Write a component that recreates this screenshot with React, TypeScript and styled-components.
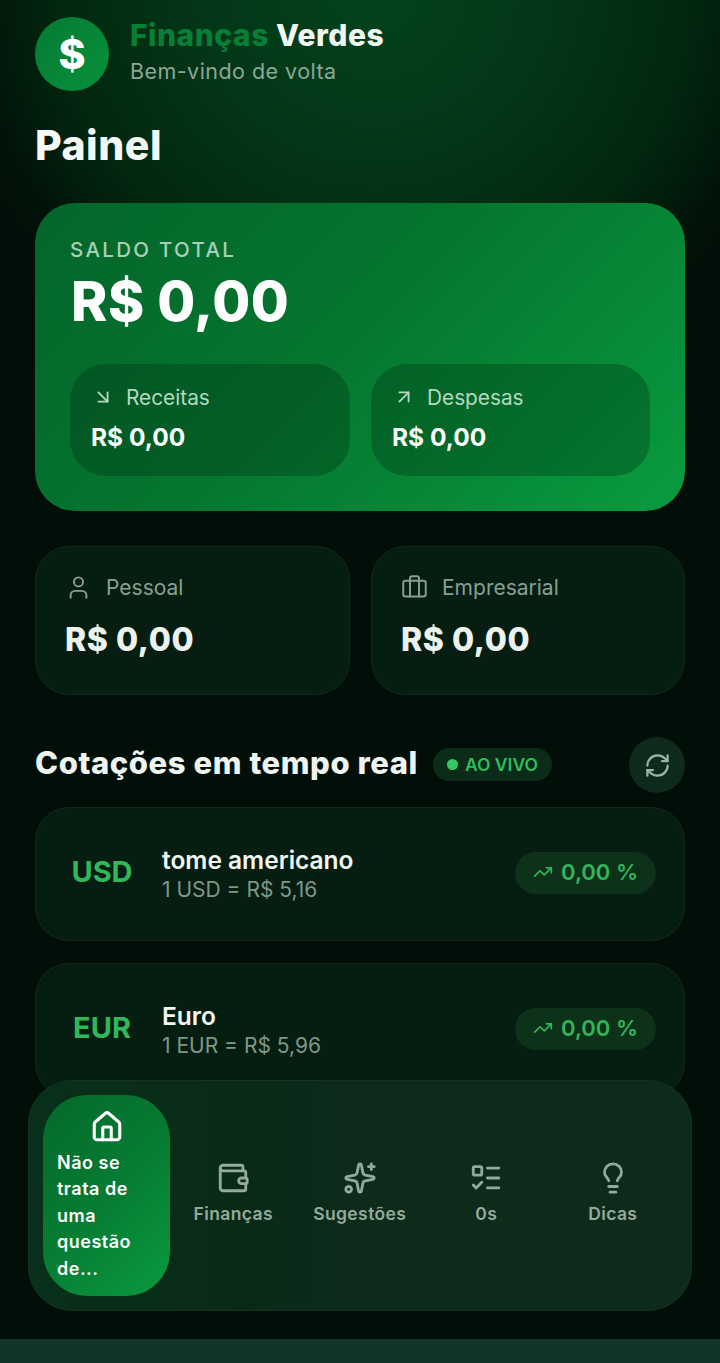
import React from "react";
import styled, { createGlobalStyle } from "styled-components";
import {
  ArrowDownRight,
  ArrowUpRight,
  Briefcase,
  House,
  Lightbulb,
  ListTodo,
  RefreshCw,
  Sparkles,
  TrendingUp,
  User,
  Wallet,
} from "lucide-react";

const Global = createGlobalStyle`
  * { box-sizing: border-box; }
  html, body { margin: 0; padding: 0; background: #010f08; }
  body { font-family: Inter, "Liberation Sans", sans-serif; }
`;

const Page = styled.div`
  position: relative;
  width: 720px;
  height: 1363px;
  overflow: hidden;
  background:
    radial-gradient(ellipse 450px 430px at 52% -10px, #04421d 0%, #033717 38%, #02270f 70%, rgba(1, 20, 10, 0.7) 90%, rgba(1, 15, 8, 0) 100%),
    #010f08;
  color: #f2f7f3;
`;

const Content = styled.main`
  padding: 17px 35px 0;
  display: flex;
  flex-direction: column;
`;

const Header = styled.header`
  display: flex;
  align-items: center;
  gap: 21px;
  height: 74px;
`;

const Logo = styled.div`
  width: 74px;
  height: 74px;
  border-radius: 50%;
  background: linear-gradient(135deg, #067a33, #07913b);
  display: flex;
  align-items: center;
  justify-content: center;
  font-size: 41px;
  font-weight: 800;
  color: #fff;
`;

const Brand = styled.div`
  display: flex;
  flex-direction: column;
  margin-top: -5px;
`;

const BrandTitle = styled.div`
  font-size: 30px;
  line-height: 36px;
  font-weight: 800;
  letter-spacing: 0.5px;
  color: #f2f7f3;
  margin-top: -1px;
`;

const BrandAccent = styled.span`
  color: #077f36;
`;

const BrandSub = styled.div`
  font-size: 21.5px;
  line-height: 28px;
  letter-spacing: 0.45px;
  color: #8aa797;
  margin-top: 4px;
`;

const PageTitle = styled.h1`
  margin: 28px 0 0;
  font-size: 41px;
  line-height: 52px;
  font-weight: 800;
  letter-spacing: 0.5px;
  color: #f4f8f5;
`;

const BalanceCard = styled.section`
  margin-top: 32px;
  height: 308px;
  border-radius: 40px;
  padding: 34px 35px;
  background: linear-gradient(135deg, #04652b 0%, #05752f 45%, #07913a 85%, #0a9c40 100%);
`;

const BalanceLabel = styled.div`
  font-size: 20.5px;
  line-height: 26px;
  font-weight: 500;
  letter-spacing: 2.3px;
  color: #a9d0b6;
`;

const BalanceValue = styled.div`
  font-size: 55px;
  line-height: 64px;
  font-weight: 800;
  letter-spacing: 0.5px;
  color: #fdfefd;
  margin-top: 6px;
  margin-left: 1px;
`;

const FlowRow = styled.div`
  display: grid;
  grid-template-columns: 280px 279px;
  gap: 21px;
  margin-top: 31px;
`;

const FlowCard = styled.div`
  height: 112px;
  border-radius: 36px;
  padding: 19px 21px;
  background: rgba(1, 40, 18, 0.3);
`;

const FlowHead = styled.div`
  display: flex;
  align-items: center;
  gap: 12px;
  height: 28px;
  font-size: 20.8px;
  color: #b4d8bf;
  padding-left: 1px;
`;

const FlowValue = styled.div`
  font-size: 24.5px;
  line-height: 32px;
  font-weight: 700;
  color: #fbfdfb;
  margin-top: 10px;
`;

const StatRow = styled.div`
  display: grid;
  grid-template-columns: 315px 314px;
  gap: 21px;
  margin-top: 35px;
`;

const StatCard = styled.div`
  height: 149px;
  border-radius: 34px;
  padding: 26px 29px;
  background: #061d11;
  border: 1px solid #12291c;
`;

const StatHead = styled.div`
  display: flex;
  align-items: center;
  gap: 14px;
  height: 28px;
  font-size: 21px;
  color: #87a091;
`;

const StatValue = styled.div`
  font-size: 32px;
  line-height: 40px;
  font-weight: 800;
  letter-spacing: 0.6px;
  color: #ecf3ee;
  margin-top: 19px;
`;

const SectionHead = styled.div`
  display: flex;
  align-items: center;
  height: 56px;
  margin-top: 42px;
`;

const SectionTitle = styled.h2`
  margin: -4px 0 0;
  font-size: 31px;
  line-height: 40px;
  font-weight: 800;
  letter-spacing: 0.58px;
  color: #eef5f0;
  white-space: nowrap;
`;

const LiveBadge = styled.div`
  display: flex;
  align-items: center;
  gap: 7px;
  height: 33px;
  margin-left: 15px;
  margin-top: -2px;
  padding: 0 14px;
  border-radius: 17px;
  background: #0b2c18;
  color: #2fbd5c;
  font-size: 17.5px;
  font-weight: 600;
  white-space: nowrap;
`;

const LiveDot = styled.span`
  width: 11px;
  height: 11px;
  border-radius: 50%;
  background: #35c862;
`;

const RefreshButton = styled.button`
  margin-left: auto;
  width: 56px;
  height: 56px;
  border-radius: 50%;
  border: 0;
  padding: 0;
  background: #0e2a1b;
  color: #9db3a6;
  display: flex;
  align-items: center;
  justify-content: center;
`;

const Quotes = styled.div`
  display: flex;
  flex-direction: column;
  gap: 22px;
  margin-top: 14px;
`;

const QuoteCard = styled.div`
  height: 134px;
  border-radius: 34px;
  padding: 0 28px 0 0;
  background: #061d11;
  border: 1px solid #12291c;
  display: flex;
  align-items: center;
`;

const Code = styled.div`
  width: 126px;
  padding-left: 6px;
  text-align: center;
  font-size: 29px;
  font-weight: 700;
  color: #2fb759;
  margin-top: -5px;
`;

const QuoteInfo = styled.div`
  display: flex;
  flex-direction: column;
  margin-top: 1px;
`;

const QuoteName = styled.div`
  font-size: 24.5px;
  line-height: 30px;
  font-weight: 600;
  color: #f2f7f3;
`;

const QuoteRate = styled.div`
  font-size: 21px;
  line-height: 30px;
  color: #7e9888;
`;

const Change = styled.div`
  margin-left: auto;
  height: 42px;
  margin-top: -3px;
  padding: 0 18px 2px 18px;
  border-radius: 21px;
  background: #0e3119;
  color: #2fb759;
  display: flex;
  align-items: center;
  gap: 8px;
  font-size: 22px;
  font-weight: 600;
  white-space: nowrap;
`;

const Nav = styled.nav`
  position: absolute;
  left: 28px;
  top: 1080px;
  width: 664px;
  height: 231px;
  border-radius: 44px;
  padding: 14px;
  border: 1px solid #163222;
  background: linear-gradient(90deg, #08301a 0%, #0a2a18 32%, #0e2a1b 55%, #0e2a1b 100%);
  display: grid;
  grid-template-columns: 127px repeat(4, 126.5px);
  align-items: center;
`;

const ActiveTab = styled.div`
  height: 201px;
  border-radius: 44px;
  padding: 15px 14px 0;
  background: linear-gradient(135deg, #05692b 0%, #067c33 50%, #0a9a3f 100%);
  color: #fdfefd;
  display: flex;
  flex-direction: column;
  font-size: 18px;
  line-height: 26.4px;
  font-weight: 600;
  letter-spacing: 0.5px;
`;

const ActiveIcon = styled.div`
  display: flex;
  justify-content: center;
  height: 38px;
  margin-bottom: 2px;
`;

const Tab = styled.div`
  display: flex;
  flex-direction: column;
  align-items: center;
  gap: 6px;
  color: #93aa9c;
  font-size: 17.5px;
  line-height: 26px;
  font-weight: 600;
  letter-spacing: 0.4px;
  margin-top: -3px;
`;

const BottomStrip = styled.div`
  position: absolute;
  left: 0;
  right: 0;
  bottom: 0;
  height: 24px;
  background: #12352a;
`;

const quotes = [
  { code: "USD", name: "tome americano", rate: "1 USD = R$ 5,16" },
  { code: "EUR", name: "Euro", rate: "1 EUR = R$ 5,96" },
];

const tabs = [
  { label: "Finanças", Icon: Wallet },
  { label: "Sugestões", Icon: Sparkles },
  { label: "0s", Icon: ListTodo },
  { label: "Dicas", Icon: Lightbulb },
];

export default function App() {
  return (
    <Page>
      <Global />
      <Content>
        <Header>
          <Logo>$</Logo>
          <Brand>
            <BrandTitle>
              <BrandAccent>Finanças</BrandAccent> Verdes
            </BrandTitle>
            <BrandSub>Bem-vindo de volta</BrandSub>
          </Brand>
        </Header>
        <PageTitle>Painel</PageTitle>
        <BalanceCard>
          <BalanceLabel>SALDO TOTAL</BalanceLabel>
          <BalanceValue>R$ 0,00</BalanceValue>
          <FlowRow>
            <FlowCard>
              <FlowHead>
                <ArrowDownRight size={22} strokeWidth={2} />
                Receitas
              </FlowHead>
              <FlowValue>R$ 0,00</FlowValue>
            </FlowCard>
            <FlowCard>
              <FlowHead>
                <ArrowUpRight size={22} strokeWidth={2} />
                Despesas
              </FlowHead>
              <FlowValue>R$ 0,00</FlowValue>
            </FlowCard>
          </FlowRow>
        </BalanceCard>
        <StatRow>
          <StatCard>
            <StatHead>
              <User size={27} strokeWidth={1.75} />
              Pessoal
            </StatHead>
            <StatValue>R$ 0,00</StatValue>
          </StatCard>
          <StatCard>
            <StatHead>
              <Briefcase size={27} strokeWidth={1.75} />
              Empresarial
            </StatHead>
            <StatValue>R$ 0,00</StatValue>
          </StatCard>
        </StatRow>
        <SectionHead>
          <SectionTitle>Cotações em tempo real</SectionTitle>
          <LiveBadge>
            <LiveDot />
            AO VIVO
          </LiveBadge>
          <RefreshButton aria-label="Atualizar">
            <RefreshCw size={27} strokeWidth={2} />
          </RefreshButton>
        </SectionHead>
        <Quotes>
          {quotes.map((q) => (
            <QuoteCard key={q.code}>
              <Code>{q.code}</Code>
              <QuoteInfo>
                <QuoteName>{q.name}</QuoteName>
                <QuoteRate>{q.rate}</QuoteRate>
              </QuoteInfo>
              <Change>
                <TrendingUp size={20} strokeWidth={2} />
                0,00 %
              </Change>
            </QuoteCard>
          ))}
        </Quotes>
      </Content>
      <Nav>
        <ActiveTab>
          <ActiveIcon>
            <House size={34} strokeWidth={2.2} />
          </ActiveIcon>
          Não se trata de uma questão de...
        </ActiveTab>
        {tabs.map(({ label, Icon }) => (
          <Tab key={label}>
            <Icon size={34} strokeWidth={2} />
            {label}
          </Tab>
        ))}
      </Nav>
      <BottomStrip />
    </Page>
  );
}
